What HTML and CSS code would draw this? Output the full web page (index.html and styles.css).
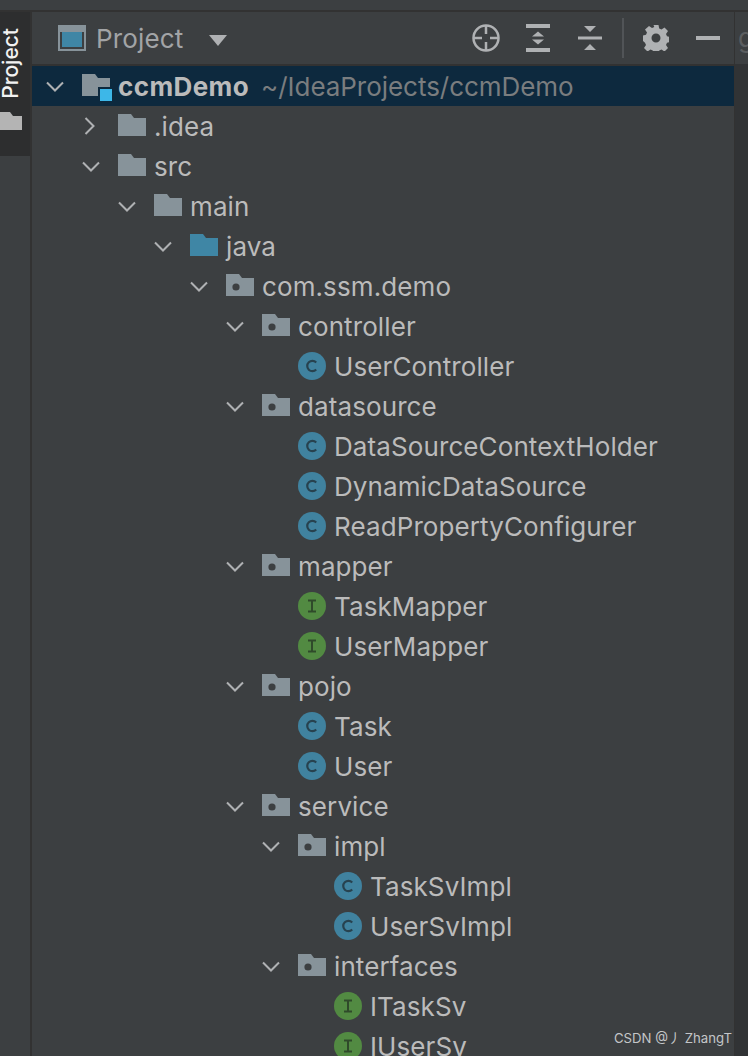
FILE: index.html
```
<!DOCTYPE html>
<html lang="en">
<head>
<meta charset="utf-8">
<title>Project</title>
<link rel="stylesheet" href="styles.css">
</head>
<body>
<svg class="defs" width="0" height="0" aria-hidden="true">
  <symbol id="chev-d" viewBox="0 0 18 11"><path d="M1 1.5l8 8 8-8" fill="none" stroke="#afb1b3" stroke-width="2"/></symbol>
  <symbol id="chev-r" viewBox="0 0 11 18"><path d="M1.5 1l8 8-8 8" fill="none" stroke="#afb1b3" stroke-width="2"/></symbol>
  <symbol id="folder" viewBox="0 0 28 22"><path d="M0 0h13l3 4h12v18H0z" fill="#87939a"/></symbol>
  <symbol id="folder-java" viewBox="0 0 28 22"><path d="M0 0h13l3 4h12v18H0z" fill="#3f86a5"/></symbol>
  <symbol id="folder-pkg" viewBox="0 0 28 22"><path d="M0 0h13l3 4h12v18H0z" fill="#87939a"/><circle cx="10" cy="13" r="3.6" fill="#3c3f41"/></symbol>
  <symbol id="folder-root" viewBox="0 0 30 27"><path d="M0 0h13l3 4h12v18H0z" fill="#87939a"/><rect x="16" y="13" width="14" height="14" fill="#0d293e"/><rect x="18" y="15" width="12" height="12" fill="#3db7e8"/></symbol>
  <symbol id="cls" viewBox="0 0 28 28"><circle cx="14" cy="14" r="14" fill="#40829f"/><path d="M18.2 10.4a5.2 5.2 0 1 0 0 7.2" fill="none" stroke="#27424f" stroke-width="2.2"/></symbol>
  <symbol id="ifc" viewBox="0 0 28 28"><circle cx="14" cy="14" r="14" fill="#528a42"/><path d="M10 8.5h8M10 19.500h8M14 8.500v11" fill="none" stroke="#2f4a2a" stroke-width="2"/></symbol>
</svg>

<div class="topbar"></div>
<div class="workspace">
  <aside class="sidebar">
    <div class="side-tab">
      <span class="side-label">Project</span>
      <svg class="side-folder" viewBox="0 0 22 18"><path d="M0 0h10l3 4h9v14H0z" fill="#b4b4b4"/></svg>
    </div>
  </aside>

  <main class="panel">
    <header class="toolbar">
      <svg class="view-icon" viewBox="0 0 28 26"><rect x="1" y="1" width="26" height="24" fill="none" stroke="#87939a" stroke-width="2"/><rect x="2" y="2" width="24" height="5" fill="#87939a"/><rect x="4" y="7" width="20" height="15" fill="#3f86a5"/></svg>
      <span class="view-name">Project</span>
      <svg class="caret" viewBox="0 0 18 11"><path d="M0 0h18L9 11z" fill="#afb1b3"/></svg>
      <span class="spacer"></span>
      <svg class="tool t-target" viewBox="0 0 28 28"><circle cx="14" cy="14" r="12.500" fill="none" stroke="#afb1b3" stroke-width="2.500"/><path d="M14 2v8M14 18v8M2 14h8M18 14h8" stroke="#afb1b3" stroke-width="2.500"/></svg>
      <svg class="tool t-expand" viewBox="0 0 24 28"><path d="M0 0h24v4H0zM0 24h24v4H0zM6 12.500l6-5 6 5zM6 15.500h12l-6 5z" fill="#afb1b3"/></svg>
      <svg class="tool t-collapse" viewBox="0 0 24 24"><path d="M0 10.500h24v3H0zM6 0h12l-6 6zM12 18l6 6H6z" fill="#afb1b3"/></svg>
      <span class="tool-sep"></span>
      <svg class="tool t-gear" viewBox="0 0 26 26"><path fill-rule="evenodd" d="M10.500 0h5l.7 3.500 2.300 1 3-2 3.500 3.500-2 3 1 2.300 3.500.7v5l-3.500.7-1 2.300 2 3-3.500 3.500-3-2-2.300 1-.7 3.500h-5l-.7-3.500-2.300-1-3 2-3.500-3.500 2-3-1-2.300L-.5 15.500v-5l3.500-.7 1-2.300-2-3L6 1l3 2 2.300-1zM13 8.500a4.500 4.500 0 1 0 0 9 4.500 4.500 0 0 0 0-9z" fill="#afb1b3"/></svg>
      <span class="t-minus"></span>
    </header>

    <div class="tree">
      <div class="row selected d0"><svg class="chev"><use href="#chev-d"/></svg><svg class="ico root"><use href="#folder-root"/></svg><span class="name bold">ccmDemo</span><span class="path">~/IdeaProjects/ccmDemo</span></div>
      <div class="row d1"><svg class="chev right"><use href="#chev-r"/></svg><svg class="ico"><use href="#folder"/></svg><span class="name">.idea</span></div>
      <div class="row d1"><svg class="chev"><use href="#chev-d"/></svg><svg class="ico"><use href="#folder"/></svg><span class="name">src</span></div>
      <div class="row d2"><svg class="chev"><use href="#chev-d"/></svg><svg class="ico"><use href="#folder"/></svg><span class="name">main</span></div>
      <div class="row d3"><svg class="chev"><use href="#chev-d"/></svg><svg class="ico"><use href="#folder-java"/></svg><span class="name">java</span></div>
      <div class="row d4"><svg class="chev"><use href="#chev-d"/></svg><svg class="ico"><use href="#folder-pkg"/></svg><span class="name">com.ssm.demo</span></div>
      <div class="row d5"><svg class="chev"><use href="#chev-d"/></svg><svg class="ico"><use href="#folder-pkg"/></svg><span class="name">controller</span></div>
      <div class="row d6 leaf"><svg class="ico round"><use href="#cls"/></svg><span class="name">UserController</span></div>
      <div class="row d5"><svg class="chev"><use href="#chev-d"/></svg><svg class="ico"><use href="#folder-pkg"/></svg><span class="name">datasource</span></div>
      <div class="row d6 leaf"><svg class="ico round"><use href="#cls"/></svg><span class="name">DataSourceContextHolder</span></div>
      <div class="row d6 leaf"><svg class="ico round"><use href="#cls"/></svg><span class="name">DynamicDataSource</span></div>
      <div class="row d6 leaf"><svg class="ico round"><use href="#cls"/></svg><span class="name">ReadPropertyConfigurer</span></div>
      <div class="row d5"><svg class="chev"><use href="#chev-d"/></svg><svg class="ico"><use href="#folder-pkg"/></svg><span class="name">mapper</span></div>
      <div class="row d6 leaf"><svg class="ico round"><use href="#ifc"/></svg><span class="name">TaskMapper</span></div>
      <div class="row d6 leaf"><svg class="ico round"><use href="#ifc"/></svg><span class="name">UserMapper</span></div>
      <div class="row d5"><svg class="chev"><use href="#chev-d"/></svg><svg class="ico"><use href="#folder-pkg"/></svg><span class="name">pojo</span></div>
      <div class="row d6 leaf"><svg class="ico round"><use href="#cls"/></svg><span class="name">Task</span></div>
      <div class="row d6 leaf"><svg class="ico round"><use href="#cls"/></svg><span class="name">User</span></div>
      <div class="row d5"><svg class="chev"><use href="#chev-d"/></svg><svg class="ico"><use href="#folder-pkg"/></svg><span class="name">service</span></div>
      <div class="row d6"><svg class="chev"><use href="#chev-d"/></svg><svg class="ico"><use href="#folder-pkg"/></svg><span class="name">impl</span></div>
      <div class="row d7 leaf"><svg class="ico round"><use href="#cls"/></svg><span class="name">TaskSvImpl</span></div>
      <div class="row d7 leaf"><svg class="ico round"><use href="#cls"/></svg><span class="name">UserSvImpl</span></div>
      <div class="row d6"><svg class="chev"><use href="#chev-d"/></svg><svg class="ico"><use href="#folder-pkg"/></svg><span class="name">interfaces</span></div>
      <div class="row d7 leaf"><svg class="ico round"><use href="#ifc"/></svg><span class="name">ITaskSv</span></div>
      <div class="row d7 leaf"><svg class="ico round"><use href="#ifc"/></svg><span class="name">IUserSv</span></div>
    </div>
  </main>

  <aside class="strip">
    <div class="strip-head"><span class="strip-letter">g</span></div>
  </aside>
</div>
<div class="watermark">CSDN @丿 ZhangT</div>
</body>
</html>
```
FILE: styles.css
```
* { box-sizing: border-box; }
html, body { margin: 0; height: 100%; }
body {
  position: relative;
  width: 748px;
  height: 1056px;
  overflow: hidden;
  background: #3c3f41;
  font-family: Inter, "Noto Sans CJK SC", sans-serif;
  color: #bbbbbb;
}
.defs { position: absolute; }
.topbar { height: 10px; background: #3c3f41; border-bottom: 0; }
.workspace {
  display: flex;
  height: 1046px;
  border-top: 2px solid #323232;
}
.sidebar {
  flex: 0 0 32px;
  background: #3c3f41;
  border-right: 2px solid #323232;
}
.side-tab {
  height: 144px;
  background: #2d2e2f;
  display: flex;
  flex-direction: column;
  padding-top: 16px;
}
.side-label {
  writing-mode: vertical-rl;
  transform: rotate(180deg);
  font-size: 21px;
  font-weight: 500;
  line-height: 22px;
  color: #f2f2f2;
  width: 22px;
}
.side-folder { width: 22px; height: 18px; margin-top: 13px; }
.panel { flex: 0 0 702px; display: flex; flex-direction: column; min-width: 0; }
.toolbar {
  flex: 0 0 54px;
  display: flex;
  align-items: center;
  border-bottom: 2px solid #323232;
  padding: 0 14px 0 26px;
  background: #3c3f41;
}
.view-icon { width: 28px; height: 26px; }
.view-name { margin-left: 10px; padding-top: 2px; font-size: 26px; letter-spacing: 0.15px; color: #a2a4a6; line-height: 30px; }
.caret { width: 18px; height: 11px; margin-left: 26px; margin-top: 4px; }
.spacer { flex: 1; }
.tool { display: block; }
.t-target { width: 28px; height: 28px; }
.t-expand { width: 24px; height: 28px; margin-left: 26px; }
.t-collapse { width: 24px; height: 24px; margin-left: 28px; }
.tool-sep { width: 2px; height: 40px; background: #515457; margin-left: 20px; }
.t-gear { width: 26px; height: 26px; margin-left: 19px; }
.t-minus { width: 24px; height: 4px; background: #afb1b3; margin-left: 27px; }
.tree { flex: 1; overflow: hidden; }
.row {
  display: flex;
  align-items: center;
  height: 40px;
  font-size: 26px;
  line-height: 38px;
  white-space: nowrap;
}
.row.selected { background: #0d293e; }
.d0 { padding-left: 14px; }
.d1 { padding-left: 50px; }
.d2 { padding-left: 86px; }
.d3 { padding-left: 122px; }
.d4 { padding-left: 158px; }
.d5 { padding-left: 194px; }
.d6 { padding-left: 230px; }
.d7 { padding-left: 266px; }
.row.leaf.d6 { padding-left: 266px; }
.row.leaf.d7 { padding-left: 302px; }
.chev { width: 18px; height: 11px; margin-right: 18px; }
.chev.right { width: 11px; height: 18px; margin-left: 2px; margin-right: 23px; }
.ico { width: 28px; height: 22px; margin-right: 8px; flex: none; position: relative; top: -1px; }
.ico.round { height: 28px; top: 0; }
.ico.root { width: 30px; height: 27px; margin-right: 6px; top: 1px; }
.name { letter-spacing: 0.1px; padding-top: 2px; }
.bold { font-weight: 700; letter-spacing: 0.4px; }
.path { margin-left: 12px; padding-top: 2px; letter-spacing: -0.04px; color: #7a7d7f; }
.strip { flex: 1; background: #313335; border-left: 1px solid #323232; }
.strip-head { height: 52px; background: #3c3f41; overflow: hidden; padding-left: 3px; }
.strip-letter { font-size: 26px; line-height: 52px; color: #5b5e60; }
.watermark {
  position: absolute;
  right: 16px;
  bottom: 8px;
  font-size: 13.2px;
  line-height: 20px;
  color: #c4c6c8;
}
```
